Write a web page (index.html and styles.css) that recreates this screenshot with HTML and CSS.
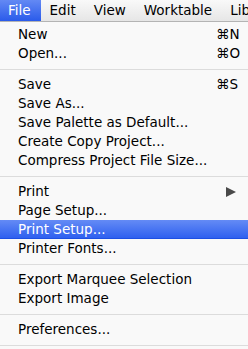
FILE: index.html
```html
<!DOCTYPE html>
<html>
<head>
<meta charset="utf-8">
<link rel="stylesheet" href="styles.css">
</head>
<body>
<div class="menubar">
  <span class="mb-item active">File</span>
  <span class="mb-item">Edit</span>
  <span class="mb-item">View</span>
  <span class="mb-item">Worktable</span>
  <span class="mb-item">Lib</span>
</div>
<div class="menu">
  <div class="row"><span>New</span><span class="key">⌘N</span></div>
  <div class="row"><span>Open...</span><span class="key">⌘O</span></div>
  <div class="sep"></div>
  <div class="row"><span>Save</span><span class="key">⌘S</span></div>
  <div class="row"><span>Save As...</span></div>
  <div class="row"><span>Save Palette as Default...</span></div>
  <div class="row"><span>Create Copy Project...</span></div>
  <div class="row"><span>Compress Project File Size...</span></div>
  <div class="sep"></div>
  <div class="row"><span>Print</span><span class="arrow"></span></div>
  <div class="row"><span>Page Setup...</span></div>
  <div class="row selected"><span>Print Setup...</span></div>
  <div class="row"><span>Printer Fonts...</span></div>
  <div class="sep"></div>
  <div class="row"><span>Export Marquee Selection</span></div>
  <div class="row"><span>Export Image</span></div>
  <div class="sep"></div>
  <div class="row"><span>Preferences...</span></div>
  <div class="sep"></div>
</div>
</body>
</html>
```
FILE: styles.css
```css
html, body {
  margin: 0;
  padding: 0;
  background: #f8f8f8;
  width: 248px;
  height: 349px;
  overflow: hidden;
  font-family: "DejaVu Sans", sans-serif;
  font-size: 13.5px;
  color: #000;
}
.menubar {
  display: flex;
  height: 21px;
  border-bottom: 1px solid #b4b4b4;
  background: linear-gradient(#f9f9f9, #e6e6e6);
  white-space: nowrap;
  line-height: 21px;
  font-size: 13.5px;
  overflow: hidden;
}
.mb-item {
  padding: 0 9px;
  flex: none;
}
.mb-item:first-child {
  padding-left: 8px;
  padding-right: 10px;
}
.mb-item.active {
  color: #fff;
  background: linear-gradient(#6389f4, #2a5bea);
}
.menu {
  padding-top: 3px;
  background: #f9f9f9;
}
.row {
  height: 19px;
  line-height: 19px;
  display: flex;
  justify-content: space-between;
  align-items: center;
  padding: 0 11px 0 18px;
  white-space: nowrap;
}
.row.selected {
  color: #fff;
  background: linear-gradient(#648bf5, #2c5eef);
  box-shadow: inset 0 -1px 0 #1d4fe3;
}
.key {
  width: 21px;
}
.arrow {
  width: 0;
  height: 0;
  border-top: 5px solid transparent;
  border-bottom: 5px solid transparent;
  border-left: 10px solid #4a4a4a;
  margin-right: 1px;
}
.sep {
  height: 12px;
  display: flex;
  align-items: center;
}
.sep::after {
  content: "";
  display: block;
  width: 100%;
  height: 1px;
  background: #dcdcdc;
}
```
